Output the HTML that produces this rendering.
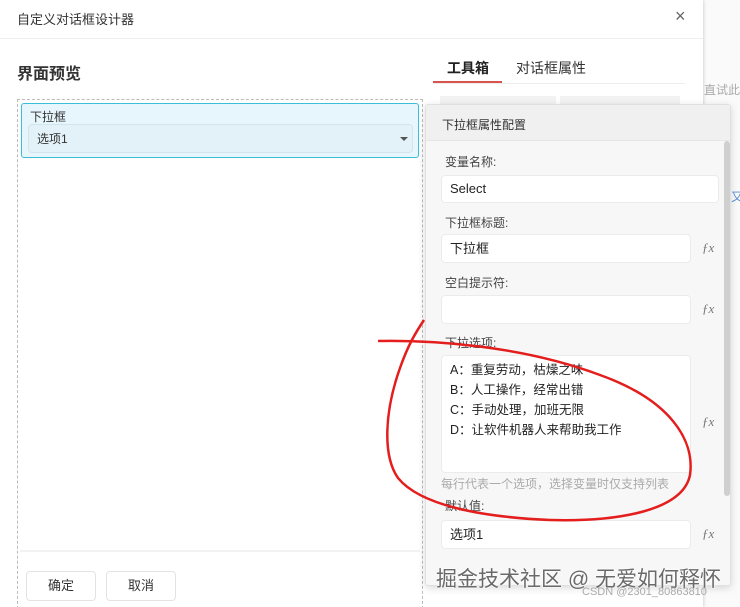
<!DOCTYPE html>
<html style="overflow:hidden;width:740px;height:607px"><head><meta charset="utf-8">
<style>
*{margin:0;padding:0;box-sizing:border-box}
body{width:740px;height:607px;overflow:hidden;background:#f4f4f4;font-family:"Liberation Sans","Noto Sans CJK SC",sans-serif;position:relative;color:#333}
.a{position:absolute}
.dlg{left:0;top:0;width:703px;height:607px;background:#fff;box-shadow:1px 0 3px rgba(0,0,0,.15);overflow:hidden}
.lbl{font-size:12px;color:#444}
.inp{background:#fff;border:1px solid #ebebeb;border-radius:4px;font-size:13px;color:#222;padding-left:8px}
.fx{font-size:13px;color:#777;font-style:italic;font-family:"Liberation Serif",serif}
</style></head><body>
<div class="a" style="left:703px;top:0;width:37px;height:607px;background:#fafafa"></div>
<div class="a" style="left:704px;top:81px;font-size:12px;color:#aaa;white-space:nowrap">直试此...</div>
<div class="a" style="left:731px;top:188px;font-size:12px;color:#5b8fd8">又</div>
<div class="a dlg">
 <div class="a" style="left:17px;top:9px;font-size:13px;color:#333">自定义对话框设计器</div>
 <div class="a" style="left:675px;top:6px;font-size:18px;color:#666">×</div>
 <div class="a" style="left:0;top:38px;width:703px;height:1px;background:#eee"></div>
 <div class="a" style="left:17px;top:60px;font-size:16px;font-weight:bold;color:#333">界面预览</div>
 <div class="a" style="left:17px;top:99px;width:406px;height:520px;border:1px dashed #bbb"></div>
 <div class="a" style="left:21px;top:103px;width:398px;height:55px;background:#e6f6fc;border:1px solid #3bbfd8;border-radius:3px"></div>
 <div class="a" style="left:30px;top:108px;font-size:12px;color:#333">下拉框</div>
 <div class="a" style="left:28px;top:124px;width:385px;height:29px;background:#e3f2f8;border:1px solid #d3e5ec;border-radius:4px"></div>
 <div class="a" style="left:37px;top:130px;font-size:12px;color:#333">选项1</div>
 <div class="a" style="left:400px;top:137px;width:0;height:0;border-left:4px solid transparent;border-right:4px solid transparent;border-top:4px solid #555"></div>
 <div class="a" style="left:20px;top:550px;width:400px;height:2px;background:#f2f2f2"></div>
 <div class="a" style="left:26px;top:571px;width:70px;height:30px;border:1px solid #e3e3e3;border-radius:4px;font-size:13px;text-align:center;line-height:28px">确定</div>
 <div class="a" style="left:106px;top:571px;width:70px;height:30px;border:1px solid #e3e3e3;border-radius:4px;font-size:13px;text-align:center;line-height:28px">取消</div>
 <div class="a" style="left:447px;top:58px;font-size:14px;font-weight:bold;color:#222">工具箱</div>
 <div class="a" style="left:516px;top:58px;font-size:14px;color:#333">对话框属性</div>
 <div class="a" style="left:433px;top:83px;width:252px;height:1px;background:#eee"></div>
 <div class="a" style="left:433px;top:81px;width:69px;height:2px;background:#d9534f"></div>
 <div class="a" style="left:440px;top:96px;width:116px;height:10px;background:#f2f2f2"></div>
 <div class="a" style="left:560px;top:96px;width:120px;height:10px;background:#f2f2f2"></div>
</div>
<div class="a" style="left:425px;top:104px;width:306px;height:482px;background:#f7f7f7;border:1px solid #e0e0e0;border-radius:3px;box-shadow:0 2px 8px rgba(0,0,0,.15)">
 <div class="a" style="left:0;top:0;width:304px;height:36px;background:#f0f0f0;border-bottom:1px solid #e6e6e6"></div>
 <div class="a" style="left:16px;top:11px;font-size:12px;color:#333">下拉框属性配置</div>
 <div class="a" style="left:298px;top:36px;width:6px;height:355px;background:#cfcfcf;border-radius:3px"></div>
</div>
<div class="a lbl" style="left:445px;top:153px">变量名称:</div>
<div class="a inp" style="left:441px;top:175px;width:278px;height:28px;line-height:26px">Select</div>
<div class="a lbl" style="left:445px;top:214px">下拉框标题:</div>
<div class="a inp" style="left:441px;top:234px;width:250px;height:29px;line-height:27px">下拉框</div>
<div class="a fx" style="left:702px;top:240px">ƒx</div>
<div class="a lbl" style="left:445px;top:274px">空白提示符:</div>
<div class="a inp" style="left:441px;top:295px;width:250px;height:29px"></div>
<div class="a fx" style="left:702px;top:301px">ƒx</div>
<div class="a lbl" style="left:445px;top:334px">下拉选项:</div>
<div class="a inp" style="left:441px;top:355px;width:250px;height:118px;padding-top:4px;line-height:20px;font-size:12.5px">A：重复劳动，枯燥之味<br>B：人工操作，经常出错<br>C：手动处理，加班无限<br>D：让软件机器人来帮助我工作</div>
<div class="a fx" style="left:702px;top:414px">ƒx</div>
<div class="a" style="left:441px;top:475px;font-size:12px;color:#aaa">每行代表一个选项，选择变量时仅支持列表</div>
<div class="a lbl" style="left:445px;top:497px">默认值:</div>
<div class="a inp" style="left:441px;top:520px;width:250px;height:29px;line-height:27px">选项1</div>
<div class="a fx" style="left:702px;top:526px">ƒx</div>
<div class="a" style="left:436px;top:563px;font-size:21px;color:#6a6a6a;text-shadow:0 0 2px #fff,0 0 2px #fff;white-space:nowrap">掘金技术社区 @ 无爱如何释怀</div>
<div class="a" style="left:582px;top:586px;font-size:11px;color:#aaa;white-space:nowrap">CSDN @2301_80863810</div>
<svg class="a" style="left:0;top:0" width="740" height="607"><path d="M378,341 C430,340 520,345 600,375 C670,400 695,440 690,475 C683,510 620,522 550,520 C480,517 420,505 398,478 C382,455 385,410 400,368 C408,345 416,332 424,320" fill="none" stroke="#e41d1d" stroke-width="2.5"/></svg>
</body></html>
